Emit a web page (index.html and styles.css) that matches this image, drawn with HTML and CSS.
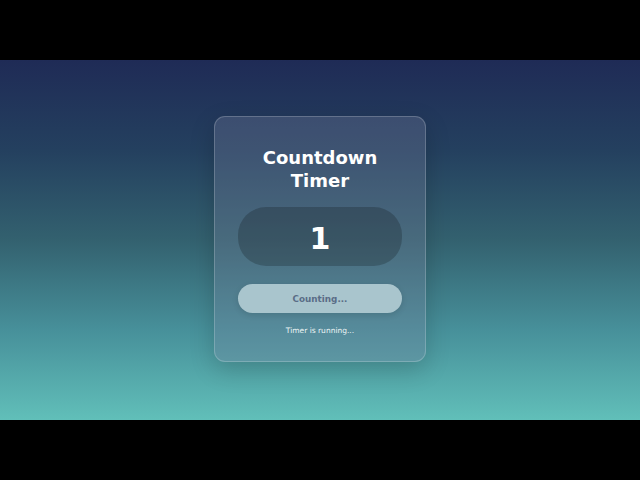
FILE: index.html
```html
<!DOCTYPE html>
<html lang="en">
<head>
<meta charset="utf-8">
<title>Countdown Timer</title>
<link rel="stylesheet" href="styles.css">
</head>
<body>
<div class="letterbox">
  <main class="screen">
    <section class="card">
      <h1 class="title">Countdown Timer</h1>
      <div class="display">1</div>
      <button class="btn" disabled>Counting...</button>
      <p class="status">Timer is running...</p>
    </section>
  </main>
</div>
</body>
</html>
```

FILE: styles.css
```css
* { box-sizing: border-box; }
html, body {
  margin: 0;
  padding: 0;
  background: #000;
  width: 640px;
  height: 480px;
  overflow: hidden;
  font-family: "DejaVu Sans", Verdana, sans-serif;
}
.letterbox {
  height: 480px;
  padding: 60px 0;
}
.screen {
  height: 360px;
  background: linear-gradient(180deg, #1f2b56 0%, #24405f 25%, #33616f 50%, #47909a 75%, #61bfb9 100%);
  display: flex;
  align-items: center;
  justify-content: center;
}
.card {
  width: 212px;
  padding: 30px 23px 26px;
  margin-top: -2px;
  border-radius: 11px;
  background: rgba(122, 130, 158, 0.3);
  border: 1px solid rgba(255, 255, 255, 0.2);
  box-shadow: 0 8px 24px rgba(0, 0, 0, 0.18);
  display: flex;
  flex-direction: column;
  align-items: stretch;
  text-align: center;
}
.title {
  margin: 0;
  font-size: 18px;
  line-height: 22.7px;
  font-weight: bold;
  color: #fff;
}
.display {
  margin-top: 15px;
  height: 59px;
  border-radius: 28px;
  background: rgba(0, 0, 0, 0.2);
  color: #fff;
  font-size: 30px;
  font-weight: bold;
  line-height: 1;
  display: flex;
  align-items: center;
  justify-content: center;
  padding-top: 4px;
}
.btn {
  margin-top: 18px;
  height: 29px;
  border: none;
  border-radius: 15px;
  background: #a9c5cd;
  color: #5a6d87;
  font-family: "DejaVu Sans", Verdana, sans-serif;
  font-size: 8.8px;
  font-weight: bold;
  padding: 0;
  box-shadow: 0 2px 6px rgba(0, 0, 0, 0.12);
}
.status {
  margin: 12.6px 0 0;
  font-size: 7.5px;
  color: #eef6f6;
}
```
